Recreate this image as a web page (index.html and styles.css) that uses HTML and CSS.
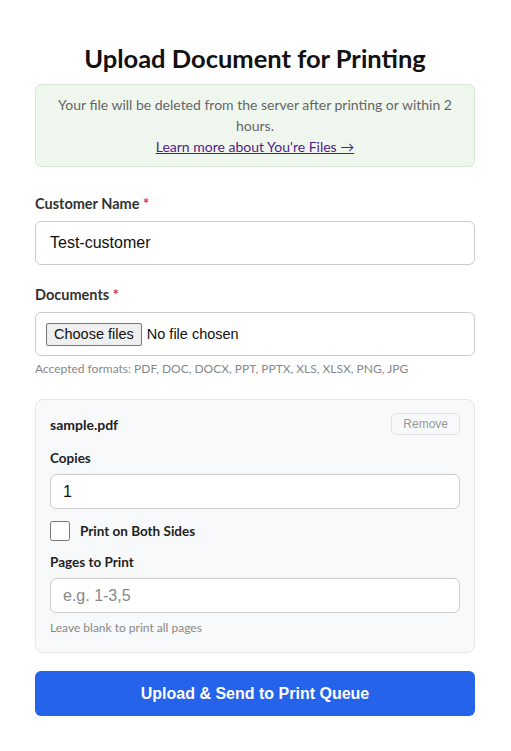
FILE: index.html
```html
<!DOCTYPE html>
<html lang="en">
<head>
<meta charset="utf-8">
<title>Upload Document for Printing</title>
<link rel="stylesheet" href="styles.css">
</head>
<body>
<main class="page">
  <h1 class="title">Upload Document for Printing</h1>
  <div class="notice">
    <p>Your file will be deleted from the server after printing or within 2 hours.</p>
    <a href="#" class="notice-link">Learn more about You're Files →</a>
  </div>

  <form class="form">
    <div class="field">
      <label class="label" for="cname">Customer Name <span class="req">*</span></label>
      <input class="input input-lg" id="cname" type="text" value="Test-customer">
    </div>

    <div class="field field-docs">
      <label class="label" for="docs">Documents <span class="req">*</span></label>
      <div class="file-box">
        <button type="button" id="docs" class="file-btn">Choose files</button>
        <span class="file-status">No file chosen</span>
      </div>
      <div class="hint">Accepted formats: PDF, DOC, DOCX, PPT, PPTX, XLS, XLSX, PNG, JPG</div>
    </div>

    <div class="card">
      <div class="card-head">
        <span class="file-name">sample.pdf</span>
        <button type="button" class="remove">Remove</button>
      </div>
      <div class="sub-field">
        <label class="sub-label" for="copies">Copies</label>
        <input class="input input-sm" id="copies" type="text" value="1">
      </div>
      <label class="check-row">
        <input type="checkbox" class="check">
        <span>Print on Both Sides</span>
      </label>
      <div class="sub-field">
        <label class="sub-label" for="pages">Pages to Print</label>
        <input class="input input-sm" id="pages" type="text" placeholder="e.g. 1-3,5">
        <div class="hint hint-card">Leave blank to print all pages</div>
      </div>
    </div>

    <button type="button" class="submit">Upload &amp; Send to Print Queue</button>
  </form>
</main>
</body>
</html>
```

FILE: styles.css
```css
* { box-sizing: border-box; }
body {
  margin: 0;
  background: #fff;
  font-family: Lato, "Noto Sans", sans-serif;
  color: #222;
}
.page {
  width: 440px;
  margin: 0 0 0 35px;
  padding-top: 38px;
}
.title {
  margin: 0 0 6px;
  text-align: center;
  font-size: 25.5px;
  font-weight: 700;
  line-height: 40px;
  color: #111;
}
.notice {
  background: #eff6ee;
  border: 1px solid #d6ead3;
  border-radius: 6px;
  padding: 9px 14px;
  text-align: center;
  font-size: 14px;
  line-height: 21px;
  color: #666;
}
.notice p { margin: 0; }
.notice-link { color: #551a8b; }
.form {
  display: flex;
  flex-direction: column;
  margin-top: 27px;
}
.field { display: flex; flex-direction: column; margin-bottom: 20px; }
.field-docs { margin-bottom: 22px; }
.label {
  font-size: 14.5px;
  font-weight: 700;
  color: #333;
  line-height: 20px;
  margin-bottom: 7px;
}
.req { color: #d33; }
.input {
  width: 100%;
  border: 1px solid #ccc;
  border-radius: 6px;
  background: #fff;
  font-family: "Liberation Sans", Arial, sans-serif;
  font-size: 16px;
  color: #111;
  outline: none;
}
.input-lg { height: 44px; padding: 0 14px; }
.input-sm { height: 35px; padding: 0 12px; }
.input::placeholder { color: #888; }
.file-box {
  height: 44px;
  border: 1px solid #ccc;
  border-radius: 6px;
  display: flex;
  align-items: center;
  gap: 5px;
  padding: 0 10px;
}
.file-btn {
  font-family: "Liberation Sans", Arial, sans-serif;
  font-size: 14.5px;
  color: #111;
  background: #efefef;
  border: 1px solid #767676;
  border-radius: 2px;
  height: 23px;
  padding: 0 7px;
  line-height: 21px;
}
.file-status {
  font-family: "Liberation Sans", Arial, sans-serif;
  font-size: 14.5px;
  color: #111;
}
.hint {
  font-size: 12px;
  color: #888;
  margin-top: 5px;
  line-height: 16px;
}
.hint-card { margin-top: 7px; }
.card {
  background: #f8f9fa;
  border: 1px solid #e4e6e8;
  border-radius: 8px;
  padding: 13px 14px 16px;
  display: flex;
  flex-direction: column;
}
.card-head {
  display: flex;
  justify-content: space-between;
  align-items: center;
  margin-bottom: 14px;
}
.file-name { font-size: 14px; font-weight: 700; color: #222; }
.remove {
  font-family: "Liberation Sans", Arial, sans-serif;
  font-size: 12px;
  color: #999;
  background: #f8f9fa;
  border: 1px solid #e2e2e2;
  border-radius: 5px;
  height: 22px;
  padding: 0 11px;
}
.sub-field { display: flex; flex-direction: column; }
.sub-label {
  font-size: 13.5px;
  font-weight: 700;
  color: #222;
  line-height: 18px;
  margin-bottom: 7px;
}
.check-row {
  display: flex;
  align-items: center;
  gap: 10px;
  margin: 12px 0 12px;
  font-size: 13.5px;
  font-weight: 700;
  color: #222;
}
.check {
  width: 20px;
  height: 20px;
  margin: 0;
}
.submit {
  margin-top: 18px;
  height: 45px;
  border: none;
  border-radius: 6px;
  background: #2563eb;
  color: #fff;
  font-family: "Liberation Sans", Arial, sans-serif;
  font-size: 16px;
  font-weight: 700;
}
```
